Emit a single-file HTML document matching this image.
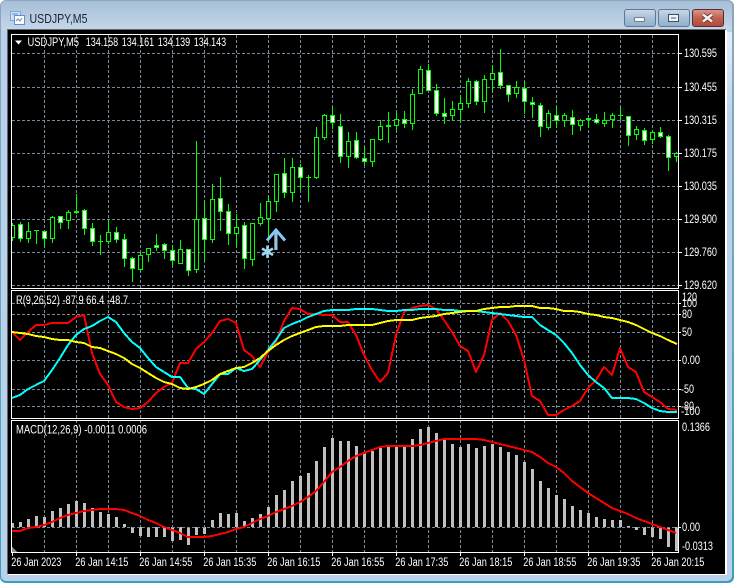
<!DOCTYPE html>
<html>
<head>
<meta charset="utf-8">
<title>USDJPY,M5</title>
<style>
html,body{margin:0;padding:0;background:#fff;width:736px;height:583px;overflow:hidden}
svg{position:absolute;left:0;top:0;display:block}
text{font-family:"Liberation Sans",sans-serif;font-size:11.5px;fill:#fff}
</style>
</head>
<body>
<svg width="736" height="583" viewBox="0 0 736 583" xmlns="http://www.w3.org/2000/svg">
<defs>
<linearGradient id="edge" x1="0" y1="0" x2="0" y2="1"><stop offset="0" stop-color="#8fa6bc"/><stop offset=".5" stop-color="#6aa6c0"/><stop offset="1" stop-color="#3a9fb8"/></linearGradient>
<linearGradient id="tb" x1="0" y1="0" x2="0" y2="1"><stop offset="0" stop-color="#a6bfd8"/><stop offset="1" stop-color="#c6d8ea"/></linearGradient>
<linearGradient id="btn" x1="0" y1="0" x2="0" y2="1"><stop offset="0" stop-color="#c9d9e8"/><stop offset=".5" stop-color="#a9c0d6"/><stop offset="1" stop-color="#8fb0cc"/></linearGradient>
<linearGradient id="cl" x1="0" y1="0" x2="0" y2="1"><stop offset="0" stop-color="#d99a8c"/><stop offset=".5" stop-color="#c2604f"/><stop offset="1" stop-color="#b04a38"/></linearGradient>
<linearGradient id="rb" x1="0" y1="0" x2="0" y2="1"><stop offset="0" stop-color="#e4eef8"/><stop offset="1" stop-color="#b9d1ea"/></linearGradient>
<clipPath id="cp"><rect x="12" y="35" width="666" height="253"/></clipPath>
<clipPath id="ci"><rect x="12" y="291" width="666" height="127"/></clipPath>
<clipPath id="cm"><rect x="12" y="421" width="666" height="131"/></clipPath>
</defs>

<!-- window -->
<rect x="0" y="0" width="734" height="583" rx="6" fill="url(#edge)"/>
<rect x="1" y="1" width="731" height="580" rx="5" fill="#b9d1ea"/>
<rect x="1" y="1" width="731" height="30" rx="5" fill="url(#tb)"/>
<rect x="727" y="32" width="5" height="90" fill="url(#rb)"/>
<rect x="7" y="29" width="719" height="545" fill="#5e6670"/>
<rect x="8" y="574" width="719" height="1" fill="#fff"/>
<rect x="725" y="30" width="2" height="545" fill="#fff"/>
<rect x="8" y="30" width="717" height="544" fill="#000"/>

<!-- title icon -->
<rect x="10.500" y="11.500" width="10" height="9" fill="#cfe2f5" stroke="#7fa8d8"/>
<rect x="14.500" y="15.500" width="10" height="9" fill="#fff" stroke="#5f8fd0"/>
<path d="M16 21l2-2 2 2 2-3" fill="none" stroke="#5f8fd0"/>
<path d="M12 14h6" stroke="#5f8fd0"/>
<text x="29.500" y="23" style="font-size:12.500px;fill:#1c2233" textLength="58" lengthAdjust="spacingAndGlyphs">USDJPY,M5</text>

<!-- buttons -->
<rect x="624.500" y="9.500" width="31" height="17" rx="2.500" fill="url(#btn)" stroke="#5f7890"/>
<rect x="658.500" y="9.500" width="31" height="17" rx="2.500" fill="url(#btn)" stroke="#5f7890"/>
<rect x="692.500" y="9.500" width="31" height="17" rx="2.500" fill="url(#cl)" stroke="#5a2a34"/>
<rect x="634.500" y="17.500" width="10" height="4" rx="1" fill="#f4f6f8" stroke="#51657a" stroke-width=".8"/>
<rect x="668.500" y="14.500" width="10" height="7" fill="#f0f4f8" stroke="#3f4f60"/>
<rect x="671" y="17" width="5" height="2" fill="#8fa6bc"/>
<path d="M703 14.500l9 7M712 14.500l-9 7" stroke="#5a2a34" stroke-width="4" fill="none"/>
<path d="M703 14.500l9 7M712 14.500l-9 7" stroke="#f4f0ee" stroke-width="2.600" fill="none"/>

<!-- vertical grid -->
<path shape-rendering="crispEdges" fill="none" stroke="#778899" stroke-dasharray="3 2" d="M44.500 35V552M76.500 35V552M108.500 35V552M140.500 35V552M172.500 35V552M204.500 35V552M236.500 35V552M268.500 35V552M300.500 35V552M332.500 35V552M364.500 35V552M396.500 35V552M428.500 35V552M460.500 35V552M492.500 35V552M524.500 35V552M556.500 35V552M588.500 35V552M620.500 35V552M652.500 35V552"/>
<!-- horizontal grid -->
<path shape-rendering="crispEdges" fill="none" stroke="#778899" stroke-dasharray="3 2" d="M12 53.500H678M12 87.500H678M12 120.500H678M12 153.500H678M12 186.500H678M12 219.500H678M12 252.500H678M12 285.500H678M12 303.500H678M12 314.500H678M12 332.500H678M12 360.500H678M12 389.500H678M12 406.500H678"/>

<!-- candles -->
<g clip-path="url(#cp)" shape-rendering="crispEdges">
<path fill="none" stroke="#00ff00" d="M12.500 223V241M20.500 222V242M28.500 222V243M36.500 230V244M44.500 231V247M52.500 216V243M60.500 216V229M68.500 210V229M76.500 194V214M84.500 209V235M92.500 223V246M100.500 235V255M108.500 219V244M116.500 227V243M124.500 234V267M132.500 257V282M140.500 252V272M148.500 248V262M156.500 234V251M164.500 243V259M172.500 245V266M180.500 240V264M188.500 249V276M196.500 141V273M204.500 201V261M212.500 184V243M220.500 177V231M228.500 204V245M236.500 214V248M244.500 222V269M252.500 223V266M260.500 203V226M268.500 197V237M276.500 174V212M284.500 158V198M292.500 158V202M300.500 164V190M308.500 175V202M316.500 127V179M324.500 114V140M332.500 106V129M340.500 114V163M348.500 132V168M356.500 132V159M364.500 147V166M372.500 139V167M380.500 120V141M388.500 112V143M396.500 111V130M404.500 111V128M412.500 89V130M420.500 66V94M428.500 64V91M436.500 84V116M444.500 98V124M452.500 101V121M460.500 95V123M468.500 78V108M476.500 80V105M484.500 75V113M492.500 65V91M500.500 49V89M508.500 85V102M516.500 81V98M524.500 81V114M532.500 97V118M540.500 103V137M548.500 110V130M556.500 106V128M564.500 113V127M572.500 110V135M580.500 119V131M588.500 118V128M596.500 114V124M604.500 112V127M612.500 113V128M620.500 107V120M628.500 116V146M636.500 126V140M644.500 128V145M652.500 130V144M660.500 127V138M668.500 135V171M676.500 152V162"/>
<path fill="none" stroke="#00ff00" d="M34 230.500h5M98 241.500h5M306 177.500h5M618 115.500h5M386 125.500h5M386 126.500h5"/>
<path fill="#000" stroke="#00ff00" d="M10.500 225.500h4V237.500h-4zM26.500 231.500h4V238.500h-4zM50.500 217.500h4V238.500h-4zM66.500 212.500h4V220.500h-4zM106.500 232.500h4V241.500h-4zM138.500 255.500h4V269.500h-4zM146.500 248.500h4V254.500h-4zM178.500 249.500h4V263.500h-4zM194.500 219.500h4V269.500h-4zM210.500 199.500h4V239.500h-4zM234.500 227.500h4V233.500h-4zM250.500 223.500h4V259.500h-4zM258.500 217.500h4V223.500h-4zM266.500 201.500h4V218.500h-4zM274.500 174.500h4V201.500h-4zM290.500 167.500h4V192.500h-4zM314.500 137.500h4V177.500h-4zM322.500 115.500h4V137.500h-4zM346.500 141.500h4V156.500h-4zM370.500 139.500h4V161.500h-4zM378.500 126.500h4V139.500h-4zM394.500 119.500h4V125.500h-4zM410.500 94.500h4V123.500h-4zM418.500 69.500h4V93.500h-4zM450.500 109.500h4V115.500h-4zM458.500 103.500h4V109.500h-4zM466.500 81.500h4V103.500h-4zM482.500 79.500h4V101.500h-4zM490.500 73.500h4V79.500h-4zM514.500 87.500h4V93.500h-4zM546.500 113.500h4V127.500h-4zM562.500 115.500h4V120.500h-4zM578.500 120.500h4V125.500h-4zM602.500 120.500h4V123.500h-4zM610.500 115.500h4V119.500h-4zM634.500 129.500h4V134.500h-4zM650.500 132.500h4V139.500h-4zM674.500 153.500h4V156.500h-4z"/>
<path fill="#fff" stroke="#00ff00" d="M18.500 224.500h4V238.500h-4zM42.500 231.500h4V238.500h-4zM58.500 216.500h4V222.500h-4zM74.500 211.500h4V212.500h-4zM82.500 210.500h4V228.500h-4zM90.500 228.500h4V241.500h-4zM114.500 232.500h4V239.500h-4zM122.500 239.500h4V258.500h-4zM130.500 258.500h4V268.500h-4zM154.500 245.500h4V247.500h-4zM162.500 244.500h4V250.500h-4zM170.500 250.500h4V260.500h-4zM186.500 249.500h4V270.500h-4zM202.500 218.500h4V239.500h-4zM218.500 198.500h4V211.500h-4zM226.500 211.500h4V233.500h-4zM242.500 225.500h4V258.500h-4zM282.500 173.500h4V192.500h-4zM298.500 167.500h4V177.500h-4zM330.500 115.500h4V122.500h-4zM338.500 126.500h4V156.500h-4zM354.500 140.500h4V157.500h-4zM362.500 158.500h4V161.500h-4zM402.500 119.500h4V123.500h-4zM426.500 70.500h4V90.500h-4zM434.500 90.500h4V113.500h-4zM442.500 113.500h4V116.500h-4zM474.500 81.500h4V101.500h-4zM498.500 72.500h4V85.500h-4zM506.500 85.500h4V94.500h-4zM522.500 88.500h4V101.500h-4zM530.500 102.500h4V104.500h-4zM538.500 105.500h4V126.500h-4zM554.500 115.500h4V120.500h-4zM570.500 117.500h4V124.500h-4zM586.500 118.500h4V119.500h-4zM594.500 119.500h4V122.500h-4zM626.500 116.500h4V135.500h-4zM642.500 130.500h4V140.500h-4zM658.500 132.500h4V136.500h-4zM666.500 136.500h4V157.500h-4z"/>
</g>

<!-- arrow and star -->
<path d="M276 231V250" stroke="#87c8f5" stroke-width="3" fill="none"/>
<path d="M274.500 233V250" stroke="#8a8478" stroke-width="1" fill="none"/>
<path d="M267 240.500L276 230L285 240.500" stroke="#87c8f5" stroke-width="3" fill="none"/>
<path d="M267.500 245.500V258M262 248.500L273 255M273 248.500L262 255" stroke="#9fd8ee" stroke-width="2.600" fill="none"/>

<!-- RSI-like pane -->
<g clip-path="url(#ci)" fill="none" stroke-width="2" stroke-linejoin="round" shape-rendering="crispEdges">
<polyline stroke="#ff0000" points="12,332 20,340 28,332 36,325 44,325 52,323 60,323 68,323 76,317 84,315 92,353 100,374 108,385 116,402 124,407 132,409 140,408 148,402 156,393 164,387 172,383 180,363 188,363 196,349 204,342 212,333 220,321 228,319 236,323 244,350 252,356 260,367 268,352 276,342 284,321 292,308 300,309 308,314 316,314 324,315 332,315 340,322 348,322 356,335 364,355 372,370 380,382 388,373 396,335 404,312 412,308 420,306 428,305 436,309 444,320 452,332 460,346 468,351 476,372 484,355 492,320 500,313 508,321 516,335 524,360 532,396 540,401 548,415 556,415 564,410 572,406 580,401 588,388 596,380 604,367 612,375 620,348 628,367 636,372 644,392 652,397 660,402 668,409 677,410"/>
<polyline stroke="#00ffff" points="12,398 20,395 28,389 36,385 44,381 52,370 60,358 68,345 76,335 84,329 92,326 100,321 108,317 116,322 124,333 132,342 140,348 148,358 156,367 164,372 172,377 180,377 188,388 196,389 204,394 212,384 220,374 228,374 236,368 244,371 252,369 260,360 268,350 276,340 284,328 292,324 300,321 308,317 316,314 324,311 332,310 340,310 348,310 356,309 364,309 372,309 380,310 388,311 396,311 404,310 412,310 420,309 428,309 436,309 444,310 452,310 460,311 468,311 476,311 484,312 492,313 500,314 508,315 516,316 524,317 532,317 540,325 548,330 556,335 564,343 572,353 580,365 588,375 596,382 604,388 612,398 620,398 628,398 636,399 644,403 652,408 660,411 668,412 677,412"/>
<polyline stroke="#ffff00" points="12,332 20,333 28,334 36,336 44,337 52,339 60,340 68,340 76,342 84,343 92,347 100,348 108,351 116,354 124,358 132,364 140,368 148,373 156,378 164,382 172,384 180,388 188,389 196,387 204,384 212,380 220,374 228,371 236,368 244,367 252,363 260,358 268,351 276,345 284,340 292,336 300,333 308,330 316,327 324,326 332,326 340,326 348,325 356,325 364,325 372,325 380,323 388,321 396,320 404,320 412,320 420,318 428,317 436,316 444,314 452,313 460,312 468,311 476,311 484,309 492,308 500,307 508,307 516,306 524,306 532,306 540,308 548,308 556,309 564,311 572,311 580,312 588,314 596,315 604,317 612,318 620,320 628,322 636,325 644,329 652,333 660,336 668,340 677,344"/>
</g>

<!-- MACD pane -->
<g clip-path="url(#cm)" shape-rendering="crispEdges">
<path fill="none" stroke="#c0c0c0" stroke-width="3" d="M12.500 523V527M20.500 522V527M28.500 519V527M36.500 516V527M44.500 517V527M52.500 511V527M60.500 508V527M68.500 504V527M76.500 501V527M84.500 503V527M92.500 508V527M100.500 512V527M108.500 514V527M116.500 517V527M124.500 524V527M132.500 527V533M140.500 527V536M148.500 527V537M156.500 527V537M164.500 527V537M172.500 527V541M180.500 527V540M188.500 527V545M196.500 527V535M204.500 527V534M212.500 520V527M220.500 513V527M228.500 514V527M236.500 513V527M244.500 521V527M252.500 518V527M260.500 514V527M268.500 507V527M276.500 495V527M284.500 490V527M292.500 481V527M300.500 476V527M308.500 473V527M316.500 461V527M324.500 447V527M332.500 438V527M340.500 441V527M348.500 441V527M356.500 446V527M364.500 452V527M372.500 451V527M380.500 448V527M388.500 447V527M396.500 447V527M404.500 447V527M412.500 439V527M420.500 429V527M428.500 427V527M436.500 433V527M444.500 440V527M452.500 444V527M460.500 447V527M468.500 444V527M476.500 448V527M484.500 446V527M492.500 444V527M500.500 447V527M508.500 452V527M516.500 455V527M524.500 462V527M532.500 469V527M540.500 481V527M548.500 488V527M556.500 495V527M564.500 499V527M572.500 506V527M580.500 510V527M588.500 513V527M596.500 517V527M604.500 519V527M612.500 520V527M620.500 520V527M628.500 526V527M636.500 527V530M644.500 527V535M652.500 527V537M660.500 527V539M668.500 527V547M676.500 527V551"/>
<path fill="none" stroke="#778899" stroke-dasharray="3 2" d="M12 527.500H678"/>
<polyline fill="none" stroke="#ff0000" stroke-width="2" stroke-linejoin="round" points="12,531 20,531 28,528 36,527 44,525 52,522 60,518 68,515 76,513 84,511 92,510 100,509 108,509 116,509 124,510 132,513 140,516 148,520 156,523 164,527 172,530 180,533 188,537 196,537 204,537 212,536 220,534 228,532 236,529 244,527 252,523 260,519 268,516 276,512 284,509 292,506 300,502 308,497 316,491 324,482 332,472 340,467 348,461 356,456 364,453 372,450 380,447 388,446 396,446 404,446 412,446 420,445 428,443 436,441 444,439 452,439 460,439 468,439 476,439 484,440 492,442 500,444 508,446 516,448 524,450 532,452 540,457 548,463 556,467 564,473 572,481 580,487 588,493 596,498 604,503 612,508 620,511 628,514 636,518 644,521 652,524 660,527 668,530 676,533"/>
<polygon points="12,547 12,552 17,552" fill="#8f8f8f"/>
</g>

<!-- frames -->
<g shape-rendering="crispEdges" fill="none" stroke="#fff">
<path d="M11.500 34.500H678.500V288.500H11.500Z"/>
<path d="M11.500 290.500H678.500V418.500H11.500Z"/>
<path d="M11.500 420.500H678.500V552.500H11.500Z"/>
<!-- axis ticks -->
<path d="M679 53.500h3M679 87.500h3M679 120.500h3M679 153.500h3M679 186.500h3M679 219.500h3M679 252.500h3M679 285.500h3M679 303.500h2M679 314.500h2M679 332.500h2M679 360.500h2M679 389.500h2M679 406.500h2M679 527.500h2M12.500 553v3M76.500 553v3M140.500 553v3M204.500 553v3M268.500 553v3M332.500 553v3M396.500 553v3M460.500 553v3M524.500 553v3M588.500 553v3M652.500 553v3"/>
</g>

<!-- header -->
<polygon points="15,40.500 22,40.500 18.500,44.500" fill="#fff"/>
<text x="27.500" y="46" textLength="51.500" lengthAdjust="spacingAndGlyphs">USDJPY,M5</text>
<text x="85.700" y="46" textLength="32.500" lengthAdjust="spacingAndGlyphs">134.158</text>
<text x="121.700" y="46" textLength="32.500" lengthAdjust="spacingAndGlyphs">134.161</text>
<text x="157.700" y="46" textLength="32.500" lengthAdjust="spacingAndGlyphs">134.139</text>
<text x="193.700" y="46" textLength="32.500" lengthAdjust="spacingAndGlyphs">134.143</text>
<text x="16" y="304" textLength="112" lengthAdjust="spacingAndGlyphs">R(9,26,52) -87.9 66.4 -48.7</text>
<text x="16" y="433.500" textLength="131" lengthAdjust="spacingAndGlyphs">MACD(12,26,9) -0.0011 0.0006</text>

<!-- price labels -->
<text x="684" y="57" textLength="33" lengthAdjust="spacingAndGlyphs">130.595</text>
<text x="684" y="91" textLength="33" lengthAdjust="spacingAndGlyphs">130.455</text>
<text x="684" y="124" textLength="33" lengthAdjust="spacingAndGlyphs">130.315</text>
<text x="684" y="157" textLength="33" lengthAdjust="spacingAndGlyphs">130.175</text>
<text x="684" y="190" textLength="33" lengthAdjust="spacingAndGlyphs">130.035</text>
<text x="684" y="223" textLength="33" lengthAdjust="spacingAndGlyphs">129.900</text>
<text x="684" y="256" textLength="33" lengthAdjust="spacingAndGlyphs">129.760</text>
<text x="684" y="289" textLength="33" lengthAdjust="spacingAndGlyphs">129.620</text>

<text x="682" y="301" textLength="15" lengthAdjust="spacingAndGlyphs">120</text>
<text x="682" y="307" textLength="15" lengthAdjust="spacingAndGlyphs">100</text>
<text x="682" y="318" textLength="10" lengthAdjust="spacingAndGlyphs">80</text>
<text x="682" y="336" textLength="10" lengthAdjust="spacingAndGlyphs">50</text>
<text x="682" y="364" textLength="18" lengthAdjust="spacingAndGlyphs">0.00</text>
<text x="681" y="393" textLength="13" lengthAdjust="spacingAndGlyphs">-50</text>
<text x="681" y="410" textLength="13" lengthAdjust="spacingAndGlyphs">-80</text>
<text x="681" y="415" textLength="19" lengthAdjust="spacingAndGlyphs">-100</text>

<text x="682" y="431" textLength="28" lengthAdjust="spacingAndGlyphs">0.1366</text>
<text x="682" y="531" textLength="18" lengthAdjust="spacingAndGlyphs">0.00</text>
<text x="682" y="550" textLength="31" lengthAdjust="spacingAndGlyphs">-0.0313</text>

<!-- time labels -->
<text x="11.300" y="566" textLength="50" lengthAdjust="spacingAndGlyphs">26 Jan 2023</text>
<text x="75.300" y="566" textLength="53" lengthAdjust="spacingAndGlyphs">26 Jan 14:15</text>
<text x="139.300" y="566" textLength="53" lengthAdjust="spacingAndGlyphs">26 Jan 14:55</text>
<text x="203.300" y="566" textLength="53" lengthAdjust="spacingAndGlyphs">26 Jan 15:35</text>
<text x="267.300" y="566" textLength="53" lengthAdjust="spacingAndGlyphs">26 Jan 16:15</text>
<text x="331.300" y="566" textLength="53" lengthAdjust="spacingAndGlyphs">26 Jan 16:55</text>
<text x="395.300" y="566" textLength="53" lengthAdjust="spacingAndGlyphs">26 Jan 17:35</text>
<text x="459.300" y="566" textLength="53" lengthAdjust="spacingAndGlyphs">26 Jan 18:15</text>
<text x="523.300" y="566" textLength="53" lengthAdjust="spacingAndGlyphs">26 Jan 18:55</text>
<text x="587.300" y="566" textLength="53" lengthAdjust="spacingAndGlyphs">26 Jan 19:35</text>
<text x="651.300" y="566" textLength="53" lengthAdjust="spacingAndGlyphs">26 Jan 20:15</text>
</svg>
</body>
</html>
